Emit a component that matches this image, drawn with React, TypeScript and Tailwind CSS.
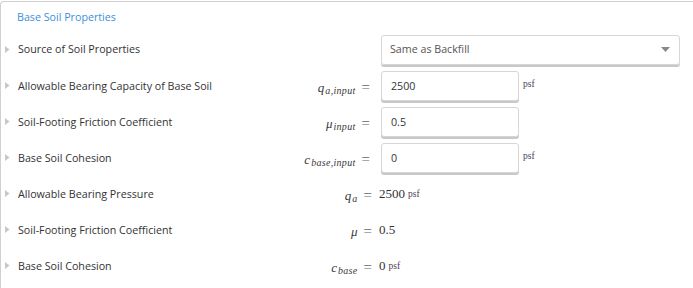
import React from "react";

const Arrow = () => (
  <svg width="5" height="7" viewBox="0 0 5 7" className="mr-[8px] shrink-0">
    <path d="M0 0 L4.5 3.5 L0 7 Z" fill="#c8c8c8" />
  </svg>
);

const M = ({ v, sub }: { v: string; sub?: string }) => (
  <span className="font-['Liberation_Serif',serif] text-[#3a3a3a]">
    <span className="italic text-[13px]">{v}</span>
    {sub && <span className="italic text-[10px] tracking-[0.3px] relative top-[2px] ml-[1px]">{sub}</span>}
    <span className="text-[15px] text-[#666] ml-[6px]">=</span>
  </span>
);

const Label = ({ text }: { text: string }) => (
  <div className="flex items-center w-[240px] pl-[4px]">
    <Arrow />
    <span className="text-[10.7px] text-[#333]">{text}</span>
  </div>
);

const Input = ({ value }: { value: string }) => (
  <div className="w-[138px] h-[30px] border border-[#d6d6d6] rounded-[3px] shadow-[0_2px_0_#c8c8c8] flex items-center pl-[9px] text-[10.7px] text-[#333] bg-white">
    {value}
  </div>
);

const Psf = ({ cls }: { cls?: string }) => (
  <span className={"font-['Liberation_Serif',serif] text-[9.5px] text-[#4a3a55] " + (cls ?? "")}>psf</span>
);

export default function App() {
  return (
    <div className="w-[693px] h-[288px] bg-white font-['Open_Sans',sans-serif] overflow-hidden">
      <div className="mt-[1px] h-[287px] border-t border-l border-[#d0d0d0] rounded-tl-[4px]">
        <div className="pl-[16px] pt-[7px] h-[29px] text-[10.7px] text-[#3d8fdc]">Base Soil Properties</div>

        <div className="flex items-center h-[37px]">
          <Label text="Source of Soil Properties" />
          <div className="w-[140px]" />
          <div className="w-[299px] h-[30px] border border-[#d6d6d6] rounded-[3px] shadow-[0_2px_0_#c8c8c8] flex items-center justify-between pl-[8px] pr-[9px] text-[10.7px] text-[#555]">
            <span>Same as Backfill</span>
            <svg width="9" height="5" viewBox="0 0 9 5">
              <path d="M0 0 L9 0 L4.5 5 Z" fill="#888" />
            </svg>
          </div>
        </div>

        <div className="flex items-center h-[36px]">
          <Label text="Allowable Bearing Capacity of Base Soil" />
          <div className="w-[130px] text-right pr-[1px]"><M v="q" sub="a,input" /></div>
          <div className="w-[10px]" />
          <Input value="2500" />
          <Psf cls="ml-[4px] -mt-[3px]" />
        </div>

        <div className="flex items-center h-[36px]">
          <Label text="Soil-Footing Friction Coefficient" />
          <div className="w-[130px] text-right pr-[1px]"><M v="μ" sub="input" /></div>
          <div className="w-[10px]" />
          <Input value="0.5" />
        </div>

        <div className="flex items-center h-[36px]">
          <Label text="Base Soil Cohesion" />
          <div className="w-[130px] text-right pr-[1px]"><M v="c" sub="base,input" /></div>
          <div className="w-[10px]" />
          <Input value="0" />
          <Psf cls="ml-[4px] -mt-[3px]" />
        </div>

        <div className="flex items-center h-[36px]">
          <Label text="Allowable Bearing Pressure" />
          <div className="w-[131px] text-right"><M v="q" sub="a" /></div>
          <div className="w-[7px]" />
          <span className="font-['Liberation_Serif',serif] text-[13px] text-[#333]">2500</span>
          <Psf cls="ml-[3px]" />
        </div>

        <div className="flex items-center h-[36px]">
          <Label text="Soil-Footing Friction Coefficient" />
          <div className="w-[131px] text-right"><M v="μ" /></div>
          <div className="w-[7px]" />
          <span className="font-['Liberation_Serif',serif] text-[13px] text-[#333]">0.5</span>
        </div>

        <div className="flex items-center h-[36px]">
          <Label text="Base Soil Cohesion" />
          <div className="w-[131px] text-right"><M v="c" sub="base" /></div>
          <div className="w-[7px]" />
          <span className="font-['Liberation_Serif',serif] text-[13px] text-[#333]">0</span>
          <Psf cls="ml-[3px]" />
        </div>
      </div>
    </div>
  );
}
